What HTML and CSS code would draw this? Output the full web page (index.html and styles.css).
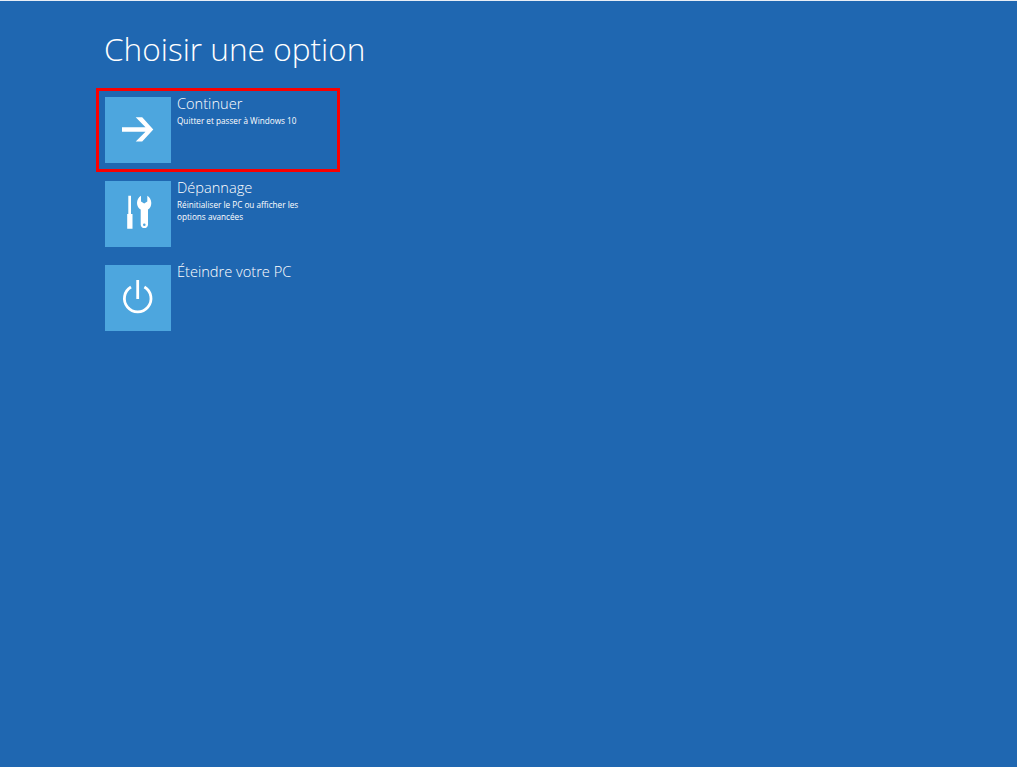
FILE: index.html
```html
<!DOCTYPE html>
<html lang="fr">
<head>
<meta charset="utf-8">
<title>Choisir une option</title>
<link rel="stylesheet" href="styles.css">
</head>
<body>
<main class="screen">
  <h1 class="title">Choisir une option</h1>
  <ul class="options">
    <li class="option option-selected">
      <span class="tile">
        <svg class="icon" viewBox="0 0 66 66" width="66" height="66"><path d="M17 30.200H40.500L30.700 20.300H37.200L48.300 32.400L37.200 44.600H30.700L40.500 34.700H17z" fill="#fff"/></svg>
      </span>
      <div class="label">
        <div class="label-title">Continuer</div>
        <div class="label-text">Quitter et passer à Windows 10</div>
      </div>
    </li>
    <li class="option">
      <span class="tile">
        <svg class="icon" viewBox="0 0 66 66" width="66" height="66">
          <path d="M23.300 14.700h2.700V33h1.500v14.700h-5.300V33h1.100z" fill="#fff"/>
          <path d="M36 14.700C33.600 16 32 18.800 32 22c0 3 1.500 5.300 3.700 6.600v15.300a3.700 3.700 0 0 0 7.300 0V28.600c2.100-1.300 3.300-3.600 3.300-6.600 0-3.200-1.600-6-4-7.300v5.900l-3.100 2-3.200-2zM39.300 42.400a1.300 1.300 0 1 1 0 2.600a1.300 1.300 0 0 1 0-2.600z" fill="#fff" fill-rule="evenodd"/>
        </svg>
      </span>
      <div class="label">
        <div class="label-title">Dépannage</div>
        <div class="label-text">Réinitialiser le PC ou afficher les options avancées</div>
      </div>
    </li>
    <li class="option">
      <span class="tile">
        <svg class="icon" viewBox="0 0 66 66" width="66" height="66" fill="none" stroke="#fff" stroke-width="2.800">
          <path d="M32.700 15v19"/>
          <path d="M26 22A13.300 13.300 0 1 0 39.400 22"/>
        </svg>
      </span>
      <div class="label">
        <div class="label-title">Éteindre votre PC</div>
      </div>
    </li>
  </ul>
</main>
</body>
</html>
```
FILE: styles.css
```css
html, body {
  margin: 0;
  height: 100%;
}
body {
  background: #1f67b1;
  font-family: "Open Sans", "Noto Sans", "Liberation Sans", sans-serif;
  color: #fff;
  overflow: hidden;
}
.screen {
  box-sizing: border-box;
  height: 767px;
  border-top: 1px solid #e8eef6;
  padding: 0 0 0 105px;
}
.title {
  margin: 0 0 0 -1px;
  height: 96px;
  box-sizing: border-box;
  padding-top: 26px;
  font-size: 31.600px;
  line-height: 44px;
  font-weight: 300;
}
.options {
  list-style: none;
  margin: 0;
  padding: 0;
  display: flex;
  flex-direction: column;
  gap: 18px;
  width: 226px;
}
.option {
  position: relative;
  display: flex;
  gap: 6px;
  height: 66px;
}
.option-selected::after {
  content: "";
  position: absolute;
  inset: -9px;
  border: 3px solid #fa0000;
}
.tile {
  flex: 0 0 66px;
  width: 66px;
  height: 66px;
  background: #4da6de;
}
.icon {
  display: block;
}
.label {
  width: 150px;
}
.label-title {
  font-size: 14.600px;
  line-height: 16px;
  font-weight: 300;
  margin-top: -2px;
  padding-bottom: 4px;
}
.label-text {
  font-size: 8.200px;
  line-height: 12px;
  font-weight: 400;
}
```
